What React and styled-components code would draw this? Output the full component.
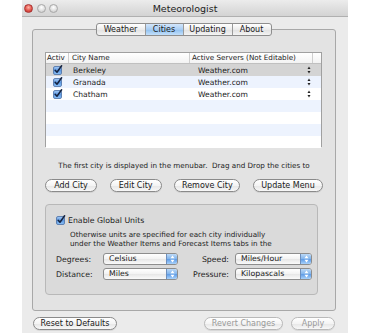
import React from 'react';
import styled, { createGlobalStyle } from 'styled-components';

const Global = createGlobalStyle`
  html, body { margin: 0; padding: 0; background: #ffffff; }
  body { font-family: "DejaVu Sans", "Liberation Sans", sans-serif; color: #222; }
  * { box-sizing: border-box; }
`;

const Window = styled.div`
  margin-left: 22px;
  width: 326px;
  height: 333px;
  background: #ebebeb;
  display: flex;
  flex-direction: column;
  overflow: hidden;
`;

const TitleBar = styled.div`
  height: 17px;
  display: grid;
  grid-template-columns: 1fr auto 1fr;
  align-items: center;
  background: linear-gradient(#ececec, #d3d3d3);
  border-bottom: 1px solid #b0b0b0;
`;

const Lights = styled.div`
  display: flex;
  gap: 3.5px;
  padding-left: 2px;
`;

const Light = styled.span`
  width: 9px;
  height: 9px;
  border-radius: 50%;
  border: 1px solid ${p => (p.$red ? '#a33' : '#a8a8a8')};
  background: ${p =>
    p.$red
      ? 'radial-gradient(circle at 50% 35%, #ffb3a8 0%, #e2544a 55%, #b72f2a 100%)'
      : 'radial-gradient(circle at 50% 35%, #ffffff 0%, #dcdcdc 60%, #c4c4c4 100%)'};
`;

const Title = styled.div`
  font-size: 9.5px;
  color: #222;
`;

const Body = styled.div`
  display: flex;
  flex-direction: column;
  padding: 6px 13px 0 10px;
`;

const TabStrip = styled.div`
  display: flex;
  justify-content: center;
  position: relative;
  z-index: 1;
`;

const Segments = styled.div`
  display: flex;
  height: 13px;
  border: 1px solid #8e8e8e;
  border-radius: 3px;
  overflow: hidden;
  background: linear-gradient(#ffffff, #ececec 50%, #e0e0e0 51%, #f4f4f4);
`;

const Segment = styled.div`
  width: ${p => p.$w}px;
  display: flex;
  align-items: center;
  justify-content: center;
  font-size: 8px;
  color: #1a1a1a;
  border-left: ${p => (p.$first ? 'none' : '1px solid #9a9a9a')};
  background: ${p =>
    p.$active
      ? 'linear-gradient(#d3e6fb, #a8cdf3 50%, #8fc0f0 51%, #c3e0fb)'
      : 'transparent'};
`;

const TabBox = styled.div`
  margin-top: -7px;
  margin-right: -1px;
  height: 282px;
  border: 1px solid #a8a8a8;
  border-radius: 3px;
  background: #e3e3e3;
  display: flex;
  flex-direction: column;
  padding: 22px 12px 0 12px;
`;

const Table = styled.div`
  width: 277px;
  height: 95px;
  border: 1px solid #a0a0a0;
  background: #ffffff;
  display: flex;
  flex-direction: column;
`;

const cols = '23px 121px 123px 1fr';

const HeaderRow = styled.div`
  display: grid;
  grid-template-columns: ${cols};
  height: 11px;
  border-bottom: 1px solid #c0c0c0;
  background: linear-gradient(#ffffff, #f3f3f3);
`;

const HeaderCell = styled.div`
  font-size: 7.2px;
  line-height: 10px;
  padding-left: ${p => p.$pad ?? 2}px;
  border-right: ${p => (p.$last ? 'none' : '1px solid #cfcfcf')};
  white-space: nowrap;
  overflow: hidden;
`;

const Rows = styled.div`
  display: flex;
  flex-direction: column;
`;

const Row = styled.div`
  display: grid;
  grid-template-columns: ${cols};
  height: 12px;
  align-items: center;
  background: ${p => (p.$selected ? '#d4d4d4' : p.$alt ? '#edf3fe' : '#ffffff')};
`;

const Cell = styled.div`
  font-size: 7.6px;
  padding-left: ${p => p.$pad ?? 0}px;
  display: flex;
  align-items: center;
  justify-content: ${p => (p.$center ? 'center' : 'space-between')};
  white-space: nowrap;
  padding-right: ${p => p.$pr ?? 0}px;
`;

const Note = styled.div`
  margin-top: 14px;
  text-align: center;
  font-size: 7.2px;
  line-height: 10px;
  white-space: nowrap;
`;

const ButtonRow = styled.div`
  margin-top: 8px;
  display: flex;
  justify-content: space-between;
  width: 278px;
`;

const PushButton = styled.button`
  width: ${p => p.$w}px;
  height: 13px;
  padding: 0;
  border: 1px solid ${p => (p.$disabled ? '#b9b9b9' : '#8a8a8a')};
  border-radius: 7px;
  background: linear-gradient(#ffffff, #f4f4f4 50%, #e6e6e6 51%, #f8f8f8);
  font-family: inherit;
  font-size: 8px;
  line-height: 11px;
  color: ${p => (p.$disabled ? '#9a9a9a' : '#1a1a1a')};
  font-weight: 400;
  box-shadow: 0 1px 0 rgba(0,0,0,0.08);
`;

const UnitsBox = styled.div`
  margin-top: 12px;
  width: 273px;
  height: 91px;
  border: 1px solid #b8b8b8;
  border-radius: 4px;
  background: #dadada;
  padding: 10px 0 0 10px;
  display: flex;
  flex-direction: column;
`;

const CheckLine = styled.div`
  display: flex;
  align-items: center;
  gap: 2px;
  font-size: 7.8px;
`;

const Explain = styled.div`
  margin: 5px 0 0 14px;
  font-size: 7.2px;
  line-height: 9px;
`;

const UnitsGrid = styled.div`
  margin-top: 5px;
  display: grid;
  grid-template-columns: 47px 75px 57px 77px;
  grid-auto-rows: 12px;
  row-gap: 3px;
  align-items: center;
`;

const Label = styled.div`
  font-size: 7.8px;
  text-align: ${p => (p.$right ? 'right' : 'left')};
  padding-right: ${p => (p.$right ? 6 : 0)}px;
  white-space: nowrap;
`;

const Popup = styled.div`
  height: 12px;
  display: flex;
  border: 1px solid #8d8d8d;
  border-radius: 3px;
  overflow: hidden;
  background: linear-gradient(#ffffff, #f2f2f2 50%, #e6e6e6 51%, #fafafa);
`;

const PopupText = styled.div`
  flex: 1;
  font-size: 7.8px;
  line-height: 10px;
  padding-left: 5px;
`;

const PopupArrows = styled.div`
  width: 11px;
  display: flex;
  align-items: center;
  justify-content: center;
  background: linear-gradient(#bcd9f7, #7fb3ec 50%, #5c9ae6 51%, #a9d2fb);
  border-left: 1px solid #6d8fbd;
`;

const Footer = styled.div`
  display: flex;
  align-items: center;
  padding: 6px 13px 0 11px;
  gap: 8px;
`;

const Spacer = styled.div`
  flex: 1;
`;

function CheckBox() {
  return (
    <svg width="10" height="10" viewBox="0 0 10 10">
      <defs>
        <linearGradient id="cbg" x1="0" y1="0" x2="0" y2="1">
          <stop offset="0" stopColor="#a9cdf6" />
          <stop offset="0.5" stopColor="#5a97e2" />
          <stop offset="1" stopColor="#8ec2f6" />
        </linearGradient>
      </defs>
      <rect x="0.5" y="1.5" width="8" height="8" rx="1.5" fill="url(#cbg)" stroke="#4a6fa5" strokeWidth="0.8" />
      <path d="M2.2 5.2 L4 7.3 L8.6 0.8" fill="none" stroke="#15233f" strokeWidth="1.5" strokeLinecap="round" strokeLinejoin="round" />
    </svg>
  );
}

function Stepper() {
  return (
    <svg width="4" height="8" viewBox="0 0 4 8">
      <path d="M2 0.5 L3.5 3 L0.5 3 Z" fill="#222" />
      <path d="M2 7.5 L3.5 5 L0.5 5 Z" fill="#222" />
    </svg>
  );
}

function WhiteArrows() {
  return (
    <svg width="5" height="8" viewBox="0 0 5 8">
      <path d="M2.5 0.5 L4.5 3.2 L0.5 3.2 Z" fill="#fff" />
      <path d="M2.5 7.5 L4.5 4.8 L0.5 4.8 Z" fill="#fff" />
    </svg>
  );
}

const cities = ['Berkeley', 'Granada', 'Chatham'];

function PopupButton({ value }) {
  return (
    <Popup>
      <PopupText>{value}</PopupText>
      <PopupArrows><WhiteArrows /></PopupArrows>
    </Popup>
  );
}

export default function App() {
  const rows = [0, 1, 2, 3, 4, 5, 6];
  return (
    <>
      <Global />
      <Window>
        <TitleBar>
          <Lights>
            <Light $red />
            <Light />
            <Light />
          </Lights>
          <Title>Meteorologist</Title>
          <div />
        </TitleBar>
        <Body>
          <TabStrip>
            <Segments>
              <Segment $w={48} $first>Weather</Segment>
              <Segment $w={38} $active>Cities</Segment>
              <Segment $w={49}>Updating</Segment>
              <Segment $w={39}>About</Segment>
            </Segments>
          </TabStrip>
          <TabBox>
            <Table>
              <HeaderRow>
                <HeaderCell $pad={1}>Activ</HeaderCell>
                <HeaderCell $pad={3}>City Name</HeaderCell>
                <HeaderCell $pad={2}>Active Servers (Not Editable)</HeaderCell>
                <HeaderCell $last />
              </HeaderRow>
              <Rows>
                {rows.map(i => (
                  <Row key={i} $selected={i === 0} $alt={i % 2 === 1}>
                    <Cell $center>{i < 3 && <CheckBox />}</Cell>
                    <Cell $pad={4}>{cities[i] || ''}</Cell>
                    <Cell $pad={8} $pr={2}>
                      {i < 3 && <>
                        <span>Weather.com</span>
                        <Stepper />
                      </>}
                    </Cell>
                    <div />
                  </Row>
                ))}
              </Rows>
            </Table>
            <Note>The first city is displayed in the menubar.&nbsp; Drag and Drop the cities to</Note>
            <ButtonRow>
              <PushButton $w={52}>Add City</PushButton>
              <PushButton $w={52}>Edit City</PushButton>
              <PushButton $w={66}>Remove City</PushButton>
              <PushButton $w={70}>Update Menu</PushButton>
            </ButtonRow>
            <UnitsBox>
              <CheckLine>
                <CheckBox />
                <span>Enable Global Units</span>
              </CheckLine>
              <Explain>
                Otherwise units are specified for each city individually<br />
                under the Weather Items and Forecast Items tabs in the
              </Explain>
              <UnitsGrid>
                <Label>Degrees:</Label>
                <PopupButton value="Celsius" />
                <Label $right>Speed:</Label>
                <PopupButton value="Miles/Hour" />
                <Label>Distance:</Label>
                <PopupButton value="Miles" />
                <Label $right>Pressure:</Label>
                <PopupButton value="Kilopascals" />
              </UnitsGrid>
            </UnitsBox>
          </TabBox>
        </Body>
        <Footer>
          <PushButton $w={84}>Reset to Defaults</PushButton>
          <Spacer />
          <PushButton $w={79} $disabled>Revert Changes</PushButton>
          <PushButton $w={44} $disabled>Apply</PushButton>
        </Footer>
      </Window>
    </>
  );
}
